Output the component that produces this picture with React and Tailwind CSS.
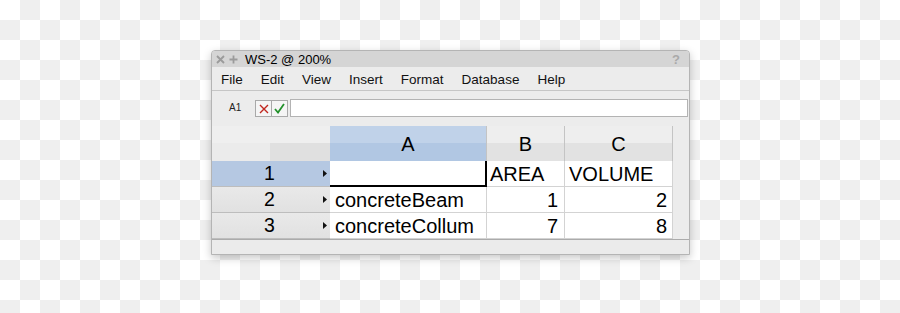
import React from 'react';

const font = { fontFamily: '"Liberation Sans", Arial, sans-serif' };

const Tri = () => (
  <svg width="4" height="7" viewBox="0 0 4 7" className="shrink-0">
    <path d="M0 0L4 3.5L0 7Z" fill="#111" />
  </svg>
);

const menus = ['File', 'Edit', 'View', 'Insert', 'Format', 'Database', 'Help'];

const rows = [
  { n: 1, a: '', b: 'AREA', c: 'VOLUME', selected: true },
  { n: 2, a: 'concreteBeam', b: '1', c: '2' },
  { n: 3, a: 'concreteCollum', b: '7', c: '8' },
];

export default function App() {
  return (
    <div
      className="w-[900px] h-[313px] pl-[211px] pt-[50px] bg-[image:conic-gradient(#efefef_25%,#ffffff_0_50%,#efefef_0_75%,#ffffff_0)] bg-size-[40px_40px]"
      style={font}
    >
      <div className="w-[479px] h-[205px] flex flex-col border border-[#b4b4b4] rounded-t-[4px] bg-[#ececec] shadow-[0_3px_8px_rgba(0,0,0,0.22)] overflow-hidden">
        {/* Title bar */}
        <div className="h-[16px] shrink-0 flex items-center bg-[#d5d5d5] pl-[2px] pr-[9px]">
          <svg width="13" height="9" viewBox="0 0 13 9" className="shrink-0">
            <path d="M3 1L10 8M10 1L3 8" stroke="#9b9b9b" strokeWidth="1.8" />
          </svg>
          <svg width="13" height="9" viewBox="0 0 13 9" className="shrink-0">
            <path d="M6.5 0.5V8.5M2.5 4.5H10.5" stroke="#9b9b9b" strokeWidth="1.8" />
          </svg>
          <span className="ml-[5px] text-[13px] leading-none text-black">WS-2 @ 200%</span>
          <span className="ml-auto text-[13px] leading-none font-bold text-[#a9a9a9]">?</span>
        </div>

        {/* Menu bar */}
        <div className="h-[24px] shrink-0 flex items-center gap-[18px] pl-[9px] pt-[2px] border-b border-[#c6c6c6]">
          {menus.map((m) => (
            <span key={m} className="text-[13.5px] leading-none text-[#111]">{m}</span>
          ))}
        </div>

        {/* Formula bar */}
        <div className="h-[35px] shrink-0 flex items-start pt-[8px]">
          <span className="ml-[17px] mt-[4px] w-[26px] text-[10px] leading-[10px] text-[#222]">A1</span>
          <div className="mt-[1px] flex h-[17px] border border-[#a9a9a9] bg-[#f5f5f5]">
            <div className="w-[16px] flex items-center justify-center border-r border-[#a9a9a9]">
              <svg width="10" height="10" viewBox="0 0 10 10">
                <path d="M1 1L9 9M9 1L1 9" stroke="#c0271f" strokeWidth="1.4" />
              </svg>
            </div>
            <div className="w-[15px] flex items-center justify-center">
              <svg width="11" height="11" viewBox="0 0 11 11">
                <path d="M1 6L4 9.5L10 1" stroke="#23912c" strokeWidth="1.8" fill="none" />
              </svg>
            </div>
          </div>
          <div className="ml-[2px] w-[398px] h-[18px] border border-[#b3b3b3] bg-white" />
        </div>

        {/* Grid */}
        <div className="flex flex-col border-b border-[#ababab] text-black">
          {/* Column headers */}
          <div className="flex h-[35px]">
            <div className="w-[118px] flex flex-col">
              <div className="h-[17px] bg-[#efefef]" />
              <div className="flex-1 flex">
                <div className="w-[58px] bg-[#ebebeb]" />
                <div className="flex-1 bg-[#e0e0e0]" />
              </div>
            </div>
            <div className="w-[157px] flex items-center justify-center border-r border-[#c4c4c4] bg-[linear-gradient(#c0d2e9_50%,#b1c7e3_50%)] text-[20px] leading-none">
              A
            </div>
            <div className="w-[78px] flex items-center justify-center border-r border-[#c4c4c4] bg-[linear-gradient(#eeeeee_50%,#e2e2e2_50%)] text-[20px] leading-none">
              B
            </div>
            <div className="w-[108px] flex items-center justify-center border-r border-[#c4c4c4] bg-[linear-gradient(#eeeeee_50%,#e2e2e2_50%)] text-[20px] leading-none">
              C
            </div>
            <div className="flex-1 bg-[#ececec]" />
          </div>

          {/* Rows */}
          {rows.map((r) => (
            <div key={r.n} className="flex h-[26px] text-[20px] leading-none">
              <div
                className={`w-[118px] flex items-center border-b border-[#bdbdbd] pr-[3px] ${
                  r.selected ? 'bg-[#b5c8e2]' : 'bg-[linear-gradient(#e9e9e9,#e1e1e1)]'
                }`}
              >
                <span className="flex-1 text-center pl-[4px] text-[19.5px]">{r.n}</span>
                <Tri />
              </div>
              <div
                className={`w-[157px] flex items-center pl-[5px] bg-white ${
                  r.selected ? 'border-r-2 border-b-2 border-black' : 'border-r border-b border-[#d3d3d3]'
                }`}
              >
                {r.a}
              </div>
              <div
                className={`w-[78px] flex items-center bg-white border-r border-b border-[#d3d3d3] ${
                  r.selected ? 'pl-[3px]' : 'justify-end pr-[6px]'
                }`}
              >
                {r.b}
              </div>
              <div
                className={`w-[108px] flex items-center bg-white border-r border-b border-[#d3d3d3] ${
                  r.selected ? 'pl-[4px]' : 'justify-end pr-[5px]'
                }`}
              >
                {r.c}
              </div>
              <div className="flex-1 bg-[#ececec]" />
            </div>
          ))}
        </div>

        {/* Status area */}
        <div className="flex-1 bg-[#ebebeb]" />
      </div>
    </div>
  );
}
